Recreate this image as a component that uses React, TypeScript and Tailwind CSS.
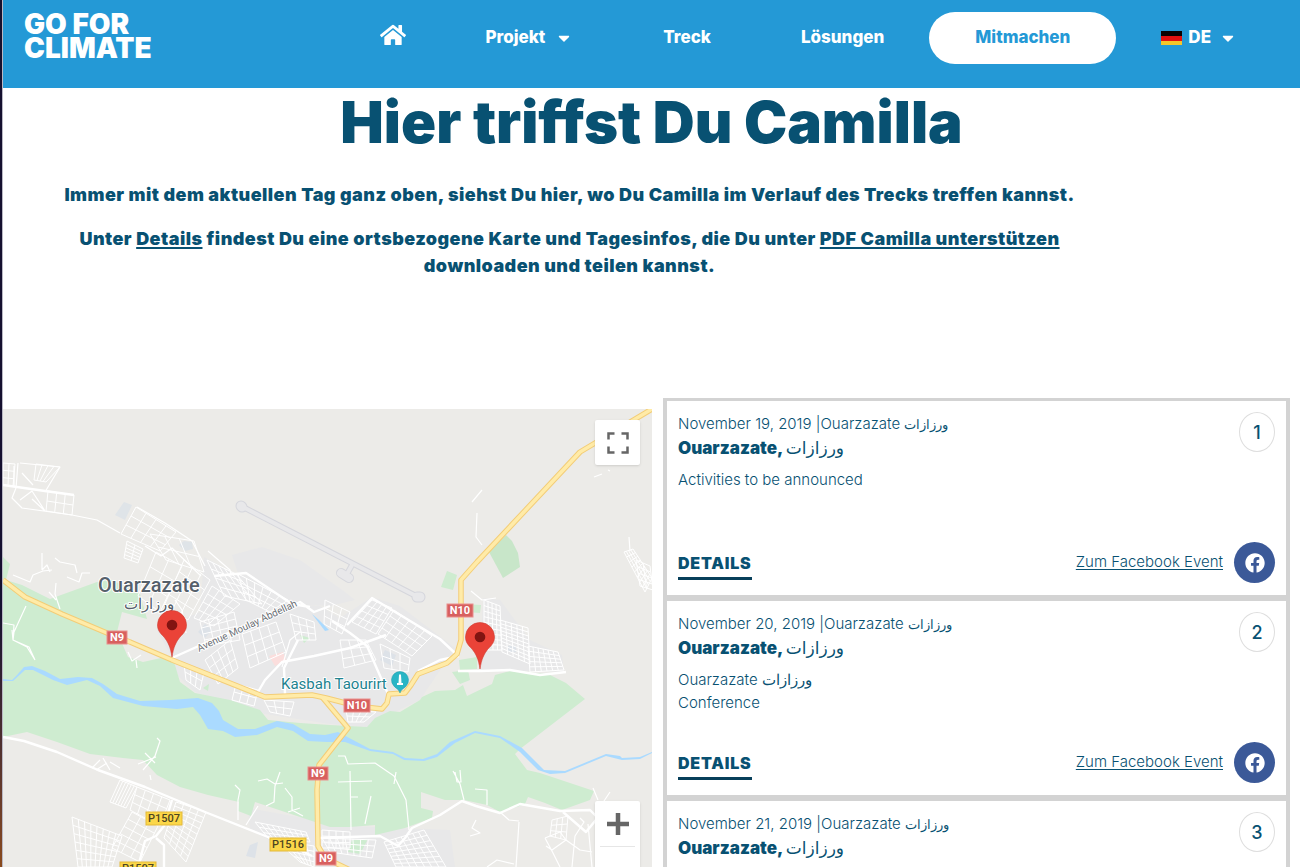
import { FaCaretDown, FaFacebook, FaHome } from "react-icons/fa";

interface Stop {
  id: number;
  date: string;
  lines: string[];
}

const stops: Stop[] = [
  { id: 1, date: "November 19, 2019", lines: ["Activities to be announced"] },
  { id: 2, date: "November 20, 2019", lines: ["Ouarzazate ورزازات", "Conference"] },
  { id: 3, date: "November 21, 2019", lines: ["Activities to be announced"] },
];

type Point = [number, number];

// Street grid spanned between four corners (clockwise from top left)
function streets(a: Point, b: Point, c: Point, d: Point, cols: number, rows: number) {
  const mix = (p: Point, q: Point, t: number) =>
    `${(p[0] + (q[0] - p[0]) * t).toFixed(1)} ${(p[1] + (q[1] - p[1]) * t).toFixed(1)}`;
  let path = "";
  for (let i = 0; i <= cols; i++) {
    path += `M${mix(a, b, i / cols)}L${mix(d, c, i / cols)}`;
  }
  for (let i = 0; i <= rows; i++) {
    path += `M${mix(a, d, i / rows)}L${mix(b, c, i / rows)}`;
  }
  return path;
}

const blocks = [
  streets([3, 463], [15, 464], [13, 486], [3, 485], 2, 3),
  streets([36, 464], [60, 467], [46, 482], [34, 480], 4, 1),
  streets([48, 491], [74, 495], [72, 515], [46, 511], 3, 2),
  streets([136, 507], [176, 532], [160, 551], [121, 534], 4, 3),
  streets([150, 534], [194, 541], [204, 572], [166, 560], 3, 2),
  streets([127, 541], [143, 549], [138, 563], [124, 558], 2, 5),
  streets([156, 552], [182, 566], [160, 612], [138, 596], 2, 3),
  streets([184, 560], [210, 580], [188, 620], [164, 606], 3, 4),
  streets([207, 560], [236, 574], [262, 604], [224, 596], 5, 4),
  streets([238, 574], [288, 600], [270, 612], [246, 600], 6, 3),
  streets([212, 586], [240, 604], [214, 626], [194, 618], 4, 4),
  streets([200, 622], [234, 612], [240, 640], [206, 646], 4, 4),
  streets([205, 660], [230, 640], [238, 668], [218, 684], 4, 3),
  streets([184, 664], [204, 672], [200, 690], [186, 680], 3, 2),
  streets([236, 684], [258, 690], [254, 706], [232, 700], 3, 2),
  streets([242, 634], [276, 622], [286, 652], [250, 668], 4, 3),
  streets([290, 614], [314, 622], [316, 640], [296, 640], 3, 3),
  streets([325, 600], [350, 612], [342, 634], [324, 624], 3, 3),
  streets([372, 600], [392, 608], [376, 634], [352, 622], 4, 4),
  streets([394, 610], [432, 636], [412, 656], [378, 634], 5, 4),
  streets([340, 640], [366, 640], [376, 660], [344, 668], 3, 3),
  streets([380, 644], [410, 658], [408, 672], [384, 668], 3, 2),
  streets([346, 710], [376, 712], [364, 722], [348, 722], 4, 2),
  streets([264, 700], [294, 702], [290, 716], [270, 712], 3, 2),
  streets([484, 600], [500, 606], [502, 650], [484, 650], 4, 9),
  streets([500, 620], [528, 628], [530, 664], [502, 652], 5, 9),
  streets([528, 646], [558, 652], [564, 670], [530, 672], 6, 5),
  streets([624, 552], [633, 549], [652, 578], [645, 592], 4, 8),
  streets([636, 560], [650, 566], [653, 590], [640, 586], 2, 4),
  streets([120, 780], [137, 787], [126, 808], [110, 802], 6, 1),
  streets([137, 787], [170, 800], [160, 826], [130, 810], 4, 3),
  streets([176, 802], [206, 812], [186, 862], [164, 838], 4, 9),
  streets([132, 812], [158, 826], [140, 862], [112, 848], 3, 5),
  streets([72, 817], [122, 836], [112, 867], [78, 867], 8, 6),
  streets([255, 822], [306, 832], [310, 842], [268, 838], 9, 3),
  streets([276, 840], [314, 846], [314, 867], [300, 862], 5, 4),
  streets([322, 830], [350, 832], [350, 848], [322, 848], 4, 3),
  streets([322, 838], [376, 840], [372, 858], [330, 852], 7, 3),
  streets([384, 842], [424, 830], [446, 867], [396, 867], 7, 7),
  streets([552, 820], [568, 816], [566, 840], [550, 836], 3, 3),
];

const lanes = [
  // north-west quarter
  "M20 463 60 467 45 492M14 466 14 486M18 463 16 488M22 473 33 485M20 500 32 491 45 511 32 499",
  "M16 488 12 498 22 508 72 515 97 520 120 533",
  "M137 507 165 523 192 541 205 566M145 546 161 556 172 548 201 576",
  // villages along the river
  "M42 553 42 570M13 575 30 582 33 575 43 571 52 570M55 558 60 562 75 565 77 573M42 570 47 565 50 572M67 577 79 582 82 573 90 573",
  "M56 583 55 594 60 609M49 592 56 600M26 606 14 632 13 640 27 647 35 660",
  "M3 623 14 625 13 640M12 630 13 640 29 647 35 660",
  "M128 652 132 661 141 655M136 660 137 668M157 738 160 741 155 756 143 770M138 764 156 757M145 753 155 763",
  "M92 768 100 760M96 770 107 763M103 758 110 770M110 762 120 768M150 775 151 780",
  "M258 781 267 779 275 784 283 783M280 772 275 786 274 802 266 806M285 788 292 797 292 810 303 816M288 812 300 808",
  "M235 785 240 790 238 800 238 820M258 806 246 825",
  "M338 756 345 756 348 764 375 763 394 776 406 800 409 830M396 772 394 784M350 771 351 830M338 782 372 781M351 797 358 797M371 796 365 824",
  "M453 771 460 784 464 800M455 772 457 782 461 782 460 770M475 789 487 790 487 805",
  // southern edge
  "M593 788 598 800M610 792 602 804M519 822 516 867M500 812 509 820 519 821M476 820 472 828 480 833 470 836M487 867 497 860 514 864",
  "M580 818 584 822 575 836 572 867M588 824 592 867M545 838 560 832 566 840 552 850 546 846M545 838 553 853 560 867M566 840 580 850 592 852",
  // north-east tracks
  "M482 490 472 502M477 513 476 537 482 545M471 591 482 600 496 598M629 537 630 551M594 477 602 474M608 470 610 471",
  "M186 633 182 610 175 600M282 667 290 640 300 632M208 551 230 570 231 575",
];

const avenues = [
  "M3 485 45 491 74 495",
  "M172 658 212 640 300 602 314 612 330 606",
  "M258 692 265 680 282 662 314 656 350 648 386 635",
  "M298 640 284 668 285 694",
  "M332 621 350 633 367 646 388 694",
  "M347 625 372 598 440 639 456 654",
  "M214 576 246 573 292 604 310 607",
  "M418 671 440 660 459 656",
  "M458 671 480 671 510 670 540 675 566 672",
  "M3 737 24 741 57 752 98 770 145 787 205 812 268 837 300 850 312 856",
  "M172 800 164 826 156 836 145 841 138 867M156 838 164 845 164 867",
  "M318 838 380 836 398 846 405 838 412 828 440 815 462 801 476 806 500 813 520 804 560 811 590 810 600 820",
  "M563 812 586 832 600 815",
];

const motorway =
  "M3 580 25 597 62 614 107 633 130 642 172 660 265 697 312 695 326 698 357 706 382 709 387 703 389 694 405 693 411 685 418 674 447 663 457 654 461 640 461 580 477 562 580 452 652 409";
const motorwaySouth = "M322 697 348 728 319 765 317 790 318 846 325 858 350 870";

interface ShieldProps {
  x: number;
  y: number;
  label: string;
  yellow?: boolean;
}

function Shield({ x, y, label, yellow = false }: ShieldProps) {
  const width = label.length === 2 ? 20 : label.length === 3 ? 26 : 36;
  return (
    <g>
      <rect
        x={x - width / 2}
        y={y - 6}
        width={width}
        height={13}
        fill={yellow ? "#fbd749" : "#d8605f"}
        stroke={yellow ? "#e3b93a" : "#e98f8d"}
      />
      <text
        x={x}
        y={y + 4}
        textAnchor="middle"
        className={yellow ? "fill-[#4d4521] text-[11px] font-medium" : "fill-white text-[11px] font-bold"}
      >
        {label}
      </text>
    </g>
  );
}

function Pin({ x, y }: { x: number; y: number }) {
  return (
    <g transform={`translate(${x} ${y})`}>
      <path
        d="M0 0C-1.500-10-4-15-8-20-12-24-14.500-27-14.500-32a14.500 14.500 0 0 1 29 0C14.500-27 12-24 8-20 4-15 1.500-10 0 0Z"
        fill="#ea4338"
        stroke="#cf3f34"
        strokeWidth=".6"
      />
      <circle cy="-32" r="5.300" fill="#811411" />
    </g>
  );
}

function RouteMap() {
  return (
    <svg
      viewBox="3 409 649 458"
      preserveAspectRatio="xMinYMin slice"
      className="block h-full w-full font-[Roboto,sans-serif]"
      role="img"
      aria-label="Karte von Ouarzazate"
    >
      <rect x="3" y="409" width="1300" height="1000" fill="#ecebe8" />

      {/* built-up areas */}
      <g fill="#e8e8e9">
        <path d="M172 658 157 630 200 612 204 557 290 604 320 606 340 618 372 597 400 606 455 648 420 700 395 712 367 727 330 724 265 714 195 692 178 676Z" />
        <path d="M232 555 262 547 300 560 345 592 355 600 330 606 290 604 240 580Z" />
        <path d="M248 808 303 818 352 826 450 830 455 867 320 867 250 830Z" />
        <path d="M483 598 500 600 530 640 562 655 564 672 480 670Z" />
      </g>

      {/* parks and farmland */}
      <g fill="#ceecd0">
        <path d="M3 557 10 564 6 580 22 585 36 592 50 599 97 582 112 580 140 594 147 619 122 612 117 632 128 657 143 662 170 656 175 665 180 682 195 693 230 700 260 710 268 720 300 723 330 725 367 727 375 718 390 711 400 712 420 700 422 697 435 691 455 690 463 685 467 696 492 684 495 675 510 671 548 674 566 683 585 699 520 749 515 754 527 770 540 773 594 791 590 800 562 810 545 803 528 797 525 804 505 811 500 812 487 805 464 800 445 800 421 792 421 808 433 811 432 818 405 828 375 835 375 825 350 827 330 827 303 818 255 802 251 816 238 811 239 802 208 795 180 787 157 775 143 760 123 758 90 754 57 742 27 732 3 737Z" />
        <path d="M447 571 457 575 453 590 441 587ZM463 604 481 605 480 613 466 612ZM459 660 477 657 477 669 460 670ZM452 672 468 670 470 680 460 684ZM352 840 368 839 360 854 348 852Z" />
        <path d="M203 688 209 684 208 691ZM300 635 310 638 304 643Z" />
      </g>
      <path d="M506 535 512 541 518 553 520 567 503 578 489 552Z" fill="#c8e6c9" />
      <path d="M124 502 132 505 125 520 115 515ZM184 541 192 542 193 549 185 551 179 545Z" fill="#dfe4e8" />
      <path d="M205 624 212 630 205 638 198 632ZM385 650 396 655 392 666 380 660ZM250 845 258 842 255 858 246 856ZM508 646 516 646 516 652 508 652Z" fill="#dde2e8" />
      <path d="M269 656 283 652 286 660 275 666Z" fill="#fbdedd" />

      {/* river */}
      <g fill="#aadaff">
        <path d="M3 679 12 680 17 675 24 667 32 666 45 671 60 679 78 677 92 678 103 684 117 694 140 701 170 700 198 698 212 703 219 711 223 720 238 729 255 729 277 721 293 724 310 734 325 735 338 732 370 749 393 752 405 758 423 759 437 754 450 742 475 731 500 736 522 748 544 770 565 771 606 754 620 756 622 758 640 757 652 752 652 753 640 759 622 760 606 756 565 773 550 774 538 770 520 752 500 738 475 733 455 743 437 757 424 761 404 760 393 754 370 751 345 742 327 742 308 741 293 731 277 727 257 735 235 737 223 731 208 729 200 715 193 707 177 709 143 706 113 698 100 686 87 680 67 685 53 680 33 670 25 670 13 681 3 681Z" />
        <path d="M312 614 319 620 329 630 325 631Z" />
      </g>

      {/* airport runway */}
      <g fill="none" strokeLinejoin="round" strokeLinecap="round">
        <g stroke="#d5d6dc">
          <path d="M241 506 418 597" strokeWidth="6" />
          <path d="M241 506 242 507M417 597 420 597" strokeWidth="11" />
          <path d="M352 565 347 574" strokeWidth="6" />
          <path d="M341 573 349 578" strokeWidth="10" />
        </g>
        <g stroke="#e8e8ea">
          <path d="M241 506 418 597" strokeWidth="4" />
          <path d="M241 506 242 507M417 597 420 597" strokeWidth="9" />
          <path d="M352 565 347 574" strokeWidth="4" />
          <path d="M341 573 349 578" strokeWidth="8" />
        </g>
      </g>

      {/* streets */}
      <g fill="none" stroke="#fff" strokeLinejoin="round">
        <path d={blocks.join("")} strokeWidth="1" />
        <path d={lanes.join("")} strokeWidth="1.200" />
        <path d={avenues.join("")} strokeWidth="2.400" />
      </g>
      <g fill="none" strokeLinejoin="round">
        <path d={motorwaySouth} stroke="#f3cd77" strokeWidth="5.500" />
        <path d={motorway} stroke="#f3cd77" strokeWidth="5.500" />
        <path d={motorwaySouth} stroke="#ffeba8" strokeWidth="3.500" />
        <path d={motorway} stroke="#ffeba8" strokeWidth="3.500" />
      </g>

      <Shield x={117} y={637} label="N9" />
      <Shield x={460} y={610} label="N10" />
      <Shield x={357} y={705} label="N10" />
      <Shield x={318} y={773} label="N9" />
      <Shield x={326} y={858} label="N9" />
      <Shield x={164} y={818} label="P1507" yellow />
      <Shield x={288} y={844} label="P1516" yellow />
      <Shield x={138} y={868} label="P1507" yellow />

      {/* place names */}
      <g stroke="#fff" strokeWidth="2" strokeLinejoin="round" paintOrder="stroke">
        <text x="98" y="592" className="fill-[#56606b] text-[20px] font-medium">Ouarzazate</text>
        <text x="149" y="609" textAnchor="middle" className="fill-[#56606b] text-[15px]">ورزازات</text>
        <text x="281" y="689" className="fill-[#21838f] text-[15px]">Kasbah Taourirt</text>
        <text transform="translate(199 652) rotate(-25)" className="fill-[#6b6f75] text-[10px]">
          Avenue Moulay Abdellah
        </text>
      </g>

      <path
        d="M400 693C399 689 395 688 393.500 685.500a8.500 8.500 0 1 1 13 0C405 688 401 689 400 693Z"
        fill="#29b5c5"
        stroke="#1d9aa8"
        strokeWidth=".5"
      />
      <path d="M400 674 401 675 401.500 683H403V685H397V683H398.500L399 675Z" fill="#fff" />

      <Pin x={172} y={657} />
      <Pin x={480} y={669} />
    </svg>
  );
}

function GermanFlag() {
  return (
    <svg viewBox="0 0 21 14" className="h-[14px] w-[21px]" aria-hidden="true">
      <rect width="21" height="5" fill="#0a0202" />
      <rect y="5" width="21" height="5" fill="#e3100f" />
      <rect y="10" width="21" height="4" fill="#f3c62a" />
    </svg>
  );
}

function Header() {
  return (
    <header className="flex h-[88px] shrink-0 items-start justify-between bg-[#2499d6] pt-3 pr-[18px] pl-[21px] text-white">
      <a href="#start" className="text-[28px] leading-[24px] font-black">
        GO FOR
        <br />
        CLIMATE
      </a>
      <nav aria-label="Hauptmenü">
        <ul className="flex h-[52px] items-center text-[17px] font-extrabold">
          <li className="px-[34px]">
            <a href="#home" aria-label="Startseite">
              <FaHome className="-mt-1.5 size-[26px]" />
            </a>
          </li>
          <li className="px-[45px]">
            <button type="button" className="flex items-center gap-2.5">
              Projekt
              <FaCaretDown className="size-[18px]" />
            </button>
          </li>
          <li className="px-[45px]">
            <a href="#treck">Treck</a>
          </li>
          <li className="px-[45px]">
            <a href="#loesungen">Lösungen</a>
          </li>
          <li>
            <a href="#mitmachen" className="flex h-[52px] items-center rounded-full bg-white px-[46px] text-[#2499d6]">
              Mitmachen
            </a>
          </li>
          <li className="px-[45px]">
            <button type="button" className="flex items-center gap-1.5">
              <GermanFlag />
              DE
              <FaCaretDown className="ml-0.5 size-[18px]" />
            </button>
          </li>
        </ul>
      </nav>
    </header>
  );
}

function StopCard({ stop }: { stop: Stop }) {
  return (
    <li className="flex min-h-[200px] shrink-0 flex-col justify-between px-[11px] pt-[11px] pb-3">
      <div className="flex justify-between">
        <div>
          <p className="text-[15px] leading-[24px] font-light">
            {stop.date} |Ouarzazate{" "}
            <span lang="ar" className="text-[13px]">
              ورزازات
            </span>
          </p>
          <h2 className="text-[17px] leading-[24px] font-black">
            Ouarzazate,{" "}
            <span lang="ar" className="font-normal">
              ورزازات
            </span>
          </h2>
          <div className="mt-2 text-[15px] leading-[23px] font-light">
            {stop.lines.map((line) => (
              <p key={line}>{line}</p>
            ))}
          </div>
        </div>
        <span className="flex h-[40px] w-[36px] items-center justify-center rounded-[50%] border border-[#dedede] text-[18px] font-medium">
          {stop.id}
        </span>
      </div>
      <div className="flex items-center justify-between">
        <a
          href={`#details-${stop.id}`}
          className="mt-[5px] border-b-[3px] border-[#073f5a] pb-0.5 text-[16px] leading-[24px] font-black tracking-wider"
        >
          DETAILS
        </a>
        <div className="flex items-center gap-[11px]">
          <a href={`#event-${stop.id}`} className="text-[15px] font-light underline underline-offset-2">
            Zum Facebook Event
          </a>
          <a
            href={`#facebook-${stop.id}`}
            aria-label="Facebook"
            className="flex size-[41px] items-center justify-center rounded-full bg-[#3b5998] text-white"
          >
            <FaFacebook className="size-[20px]" />
          </a>
        </div>
      </div>
    </li>
  );
}

export default function App() {
  return (
    <div className="flex h-screen overflow-hidden bg-white font-[Inter,'DejaVu_Sans',sans-serif] text-[#085172]">
      <div className="w-[3px] shrink-0 border-r border-[#b9b8c4] bg-gradient-to-b from-[#15102f] from-70% to-[#8a4a1c]" />
      <div className="flex min-w-0 flex-1 flex-col">
        <Header />
        <main className="flex min-h-0 flex-1 flex-col">
          <h1 className="text-center text-[58px] leading-[68px] font-black">Hier triffst Du Camilla</h1>
          <div className="mt-[25px] mb-[119px] flex flex-col gap-[17px] pr-[196px] pl-8 text-center text-[18px] leading-[27px] font-black tracking-wide">
            <p>Immer mit dem aktuellen Tag ganz oben, siehst Du hier, wo Du Camilla im Verlauf des Trecks treffen kannst.</p>
            <p>
              Unter{" "}
              <a href="#details" className="underline decoration-2 underline-offset-2">
                Details
              </a>{" "}
              findest Du eine ortsbezogene Karte und Tagesinfos, die Du unter{" "}
              <a href="#pdf" className="underline decoration-2 underline-offset-2">
                PDF Camilla unterstützen
              </a>{" "}
              downloaden und teilen kannst.
            </p>
          </div>

          <div className="grid min-h-0 flex-1 grid-cols-[649fr_627fr] gap-[11px] pr-2.5">
            <section className="relative mt-[11px] min-h-0 overflow-hidden" aria-label="Karte">
              <RouteMap />
              <button
                type="button"
                aria-label="Vollbild"
                className="absolute top-[11px] right-3 flex size-[45px] items-center justify-center rounded-xs bg-white shadow"
              >
                <svg viewBox="0 0 22 22" className="size-[22px]" fill="none" stroke="#666" strokeWidth="2.500" aria-hidden="true">
                  <path d="M1.500 7.500V1.500H7.500M14.500 1.500H20.500V7.500M20.500 14.500V20.500H14.500M7.500 20.500H1.500V14.500" />
                </svg>
              </button>
              <div className="absolute right-3 bottom-0 h-[66px] w-[45px] rounded-t-xs bg-white shadow">
                <button
                  type="button"
                  aria-label="Vergrößern"
                  className="mx-auto flex h-[46px] w-[35px] items-center justify-center border-b border-[#e6e6e6]"
                >
                  <svg viewBox="0 0 22 22" className="size-[22px]" fill="none" stroke="#666" strokeWidth="4.500" aria-hidden="true">
                    <path d="M11 0V22M0 11H22" />
                  </svg>
                </button>
              </div>
            </section>

            <ul className="flex min-h-0 flex-col divide-y-[6px] divide-[#d3d3d3] overflow-y-auto border-x-4 border-t-[3px] border-[#d3d3d3] [scrollbar-width:none]">
              {stops.map((stop) => (
                <StopCard key={stop.id} stop={stop} />
              ))}
            </ul>
          </div>
        </main>
      </div>
    </div>
  );
}
